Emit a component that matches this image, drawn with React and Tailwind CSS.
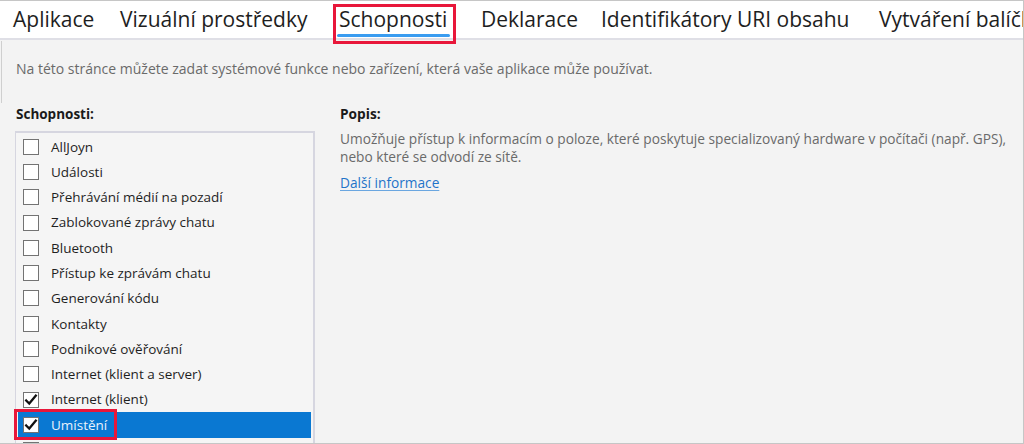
import React from 'react';

const tabs = [
	{ label: 'Aplikace', w: 'w-[107px]' },
	{ label: 'Vizuální prostředky', w: 'w-[219px]' },
	{ label: 'Schopnosti', w: 'w-[142px]', active: true },
	{ label: 'Deklarace', w: 'w-[120px]' },
	{ label: 'Identifikátory URI obsahu', w: 'w-[278px]' },
	{ label: 'Vytváření balíčku', w: 'w-[200px]' },
];

const items = [
	{ label: 'AllJoyn' },
	{ label: 'Události' },
	{ label: 'Přehrávání médií na pozadí' },
	{ label: 'Zablokované zprávy chatu' },
	{ label: 'Bluetooth' },
	{ label: 'Přístup ke zprávám chatu' },
	{ label: 'Generování kódu' },
	{ label: 'Kontakty' },
	{ label: 'Podnikové ověřování' },
	{ label: 'Internet (klient a server)' },
	{ label: 'Internet (klient)', checked: true },
	{ label: 'Umístění', checked: true, selected: true },
	{ label: 'Mikrofon' },
];

function Check() {
	return (
		<svg viewBox="0 0 16 16" className="w-[14px] h-[14px]" fill="none" stroke="#111" strokeWidth="2.6" strokeLinecap="square">
			<path d="M2.5 8.5 L6 12 L13.5 3" />
		</svg>
	);
}

export default function App() {
	return (
		<div className="relative w-[1024px] h-[444px] overflow-hidden bg-[#f3f3f3] border-t border-r border-b border-[#c6c6c6] font-['Open_Sans',sans-serif]">
			{/* karty */}
			<div className="flex h-[39px] bg-white border-b-2 border-[#dfdfe6] pl-[13px] whitespace-nowrap text-[21px] text-[#1e1e1e]">
				{tabs.map((t) => (
					<div key={t.label} className={`shrink-0 ${t.w} pt-[3px]`}>
						<span className="relative inline-block leading-[28px]">
							{t.label}
							{t.active && <span className="absolute left-[-2px] right-[-3px] top-[29px] h-[3px] rounded-full bg-[#3a9cf0]" />}
						</span>
					</div>
				))}
			</div>
			<div className="absolute left-[333px] top-[3px] w-[123px] h-[40px] border-[3px] border-[#e8173a]" />
			<div className="absolute left-[1px] top-[40px] w-[1px] h-[62px] bg-[#cfcfcf]" />

			<p className="mt-[19px] pl-[16px] text-[14px] leading-[20px] text-[#6a6a6a]">
				Na této stránce můžete zadat systémové funkce nebo zařízení, která vaše aplikace může používat.
			</p>

			<div className="flex mt-[25px]">
				<div className="w-[300px] ml-[15px] shrink-0">
					<div className="text-[13.5px] font-bold text-[#1a1a1a] pl-[1px] h-[20px] leading-[20px]">Schopnosti:</div>
					<div className="mt-[7px] border-t-2 border-r-2 border-l border-[#d6d6e0] pt-[1px] px-[2px] bg-[#f5f5f5]">
						{items.map((it) => (
							<div key={it.label} className={`relative flex items-center h-[25.3px] pl-[5px] ${it.selected ? 'bg-[#0a78d2]' : ''}`}>
								<span className="flex items-center justify-center w-[16px] h-[16px] border border-[#737373] bg-white">
									{it.checked && <Check />}
								</span>
								<span className={`ml-[12px] text-[13.5px] ${it.selected ? 'text-[#e8f1fb]' : 'text-[#1f1f1f]'}`}>{it.label}</span>
								{it.selected && <div className="absolute left-[-4px] top-[-3px] w-[103px] h-[31px] border-[3px] border-[#e8173a]" />}
							</div>
						))}
					</div>
				</div>
				<div className="ml-[25px]">
					<div className="text-[13.7px] font-bold text-[#1a1a1a] h-[20px] leading-[20px]">Popis:</div>
					<p className="mt-[6px] text-[13.7px] leading-[18px] text-[#6a6a6a] whitespace-nowrap">
						Umožňuje přístup k informacím o poloze, které poskytuje specializovaný hardware v počítači (např. GPS),
						<br />
						nebo které se odvodí ze sítě.
					</p>
					<a className="inline-block mt-[7px] text-[13.7px] text-[#1f74c9] underline underline-offset-2 decoration-[#6aa6e0]">Další informace</a>
				</div>
			</div>
		</div>
	);
}
